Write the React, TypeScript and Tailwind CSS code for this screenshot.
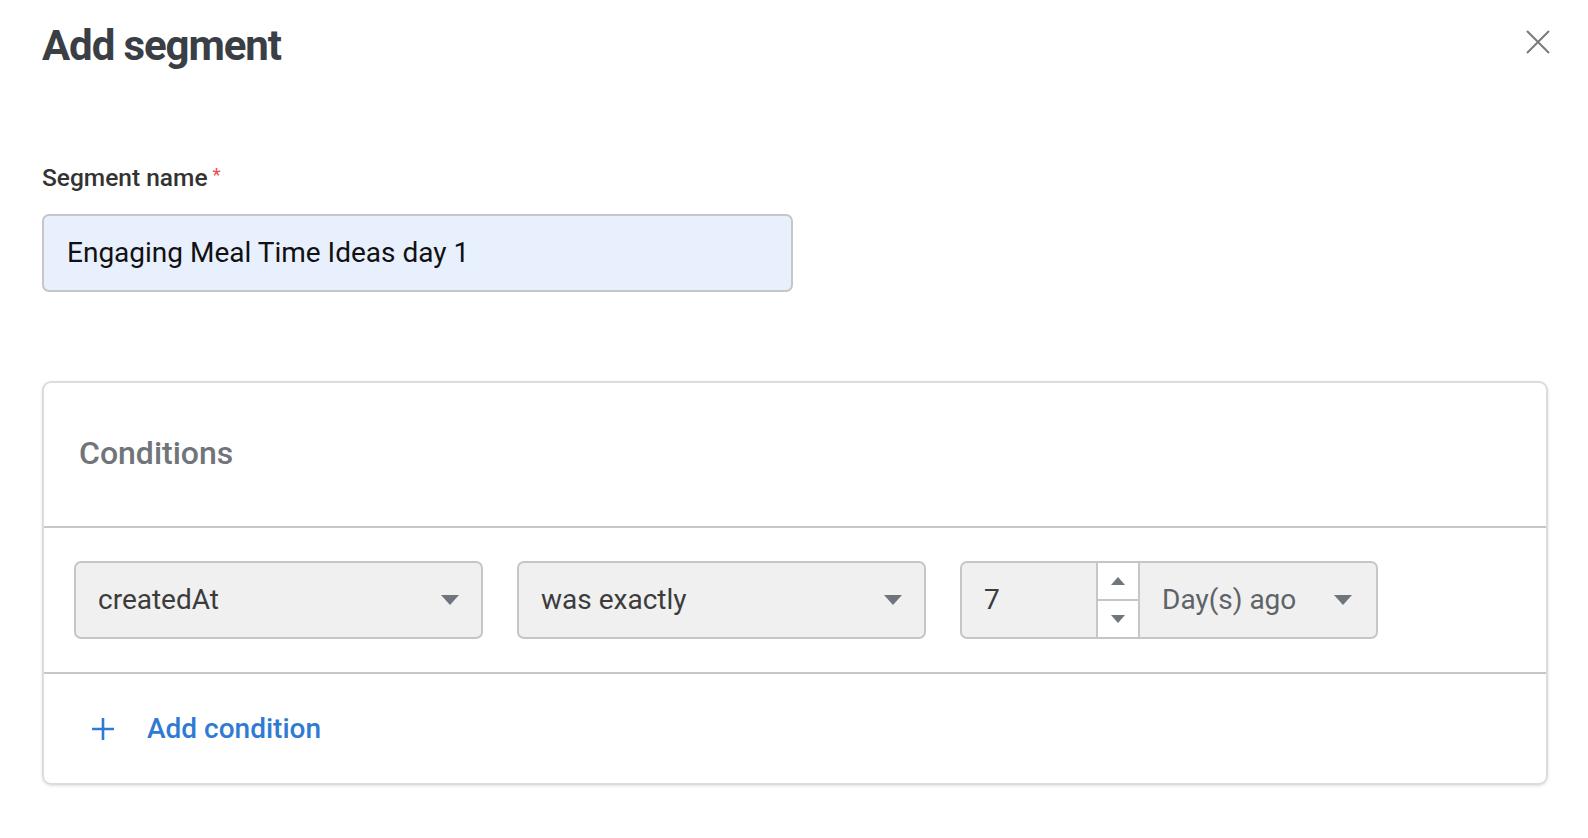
function Caret({ className = "" }: { className?: string }) {
  return (
    <svg width="18" height="10" viewBox="0 0 18 10" className={className}>
      <path d="M0 0h18L9 10z" fill="#6f757c" />
    </svg>
  );
}

function Select({ value, muted = false }: { value: string; muted?: boolean }) {
  return (
    <div className="w-[409px] h-[78px] bg-[#f0f0f0] border-2 border-[#c6c6c6] rounded-[7px] flex items-center justify-between pl-[22px] pr-[22px]">
      <span className={muted ? "text-[28px] text-[#5f6368]" : "text-[28px] text-[#3c3c3c]"}>{value}</span>
      <Caret />
    </div>
  );
}

export default function App() {
  return (
    <div className="min-h-screen bg-white px-[42px] pt-[18px] font-['Roboto',sans-serif]">
      <div className="flex items-start justify-between">
        <h1 className="text-[42px] font-bold text-[#3a3f45] tracking-[-1.1px] leading-[56px]">Add segment</h1>
        <button className="mt-[12px] -mr-[4px]">
          <svg width="24" height="24" viewBox="0 0 24 24">
            <path d="M1 1L23 23M23 1L1 23" stroke="#7a7a7a" strokeWidth="2" />
          </svg>
        </button>
      </div>

      <div className="mt-[90px] flex items-start text-[24.5px] font-medium text-[#333] leading-[28px]">
        Segment name
        <span className="text-[#ef5350] text-[18px] ml-[5px] -mt-[3px]">*</span>
      </div>

      <div className="mt-[22px] w-[751px] h-[78px] bg-[#e8f0fe] border-2 border-[#c6c6c6] rounded-[7px] flex items-center pl-[23px]">
        <span className="text-[28px] text-[#111]">Engaging Meal Time Ideas day 1</span>
      </div>

      <div className="mt-[89px] w-[1506px] border-2 border-[#dcdcdc] rounded-[9px] shadow-[0_1px_3px_rgba(0,0,0,0.12)]">
        <div className="h-[145px] flex items-center pl-[35px] pb-[4px] border-b-2 border-[#c8c8c8]">
          <span className="text-[32px] font-medium text-[#70757a]">Conditions</span>
        </div>

        <div className="h-[146px] flex items-center gap-[34px] pl-[30px] border-b-2 border-[#c8c8c8]">
          <Select value="createdAt" />
          <Select value="was exactly" />
          <div className="h-[78px] flex bg-[#f0f0f0] border-2 border-[#c6c6c6] rounded-[7px] overflow-hidden">
            <div className="w-[134px] flex items-center pl-[22px] text-[28px] text-[#3c3c3c]">7</div>
            <div className="w-[44px] flex flex-col bg-white border-x-2 border-[#c6c6c6]">
              <div className="flex-1 flex items-center justify-center border-b-2 border-[#c6c6c6]">
                <svg width="14" height="8" viewBox="0 0 14 8"><path d="M7 0l7 8H0z" fill="#6f757c" /></svg>
              </div>
              <div className="flex-1 flex items-center justify-center">
                <svg width="14" height="8" viewBox="0 0 14 8"><path d="M0 0h14L7 8z" fill="#6f757c" /></svg>
              </div>
            </div>
            <div className="w-[236px] flex items-center justify-between pl-[22px] pr-[24px]">
              <span className="text-[28px] text-[#5f6368]">Day(s) ago</span>
              <Caret />
            </div>
          </div>
        </div>

        <div className="h-[109px] flex items-center pl-[47px]">
          <svg width="24" height="24" viewBox="0 0 24 24" className="mr-[32px]">
            <path d="M12 1v22M1 12h22" stroke="#2f7bd3" strokeWidth="2.6" />
          </svg>
          <span className="text-[28px] font-medium text-[#2f7bd3]">Add condition</span>
        </div>
      </div>
    </div>
  );
}
